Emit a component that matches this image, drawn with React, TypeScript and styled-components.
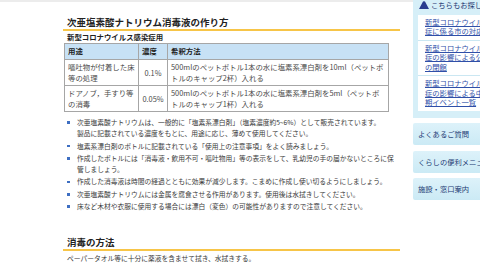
import React from 'react';
import styled, { createGlobalStyle } from 'styled-components';

const GlobalStyle = createGlobalStyle`
  html, body {
    margin: 0;
    padding: 0;
    background: #fff;
    overflow: hidden;
  }
  body {
    font-family: "Noto Sans CJK JP", "Noto Sans", sans-serif;
    color: #333;
  }
`;

const Page = styled.div`
  display: flex;
  align-items: flex-start;
  width: 530px;
`;

const MainArea = styled.main`
  flex: 0 0 413px;
  box-sizing: border-box;
  border-top: 2px solid #ececec;
  padding: 0 13px 0 63px;
`;

const Title = styled.h2<{ $top: number }>`
  margin: ${({ $top }) => $top}px 0 0;
  padding: 0 0 0 4px;
  font-size: 9.5px;
  line-height: 14px;
  font-weight: 700;
  color: #222;
  border-bottom: 2px solid #f7c548;
`;

const SubTitle = styled.h3`
  margin: 1.2px 0 1.3px;
  padding-left: 4px;
  font-size: 7.4px;
  line-height: 10px;
  font-weight: 700;
  color: #222;
`;

const Table = styled.table`
  margin-left: 1px;
  width: 324px;
  border-collapse: collapse;
  table-layout: fixed;
  font-size: 7.4px;
  line-height: 10.5px;
`;

const Col = styled.col<{ $w: number }>`
  width: ${({ $w }) => $w}px;
`;

const Th = styled.th`
  padding: 2.5px 3px;
  border: 1px solid #a6a6a6;
  background: #c7e1f5;
  text-align: left;
  font-weight: 700;
  color: #222;
`;

const Td = styled.td<{ $center?: boolean }>`
  padding: 2px 3px;
  border: 1px solid #a6a6a6;
  vertical-align: middle;
  text-align: ${({ $center }) => ($center ? 'center' : 'left')};
  color: #4a4a4a;
`;

const NoteList = styled.ul`
  list-style: none;
  margin: 4.5px 0 0;
  padding: 0 0 0 4px;
  width: 332px;
  font-size: 6.75px;
  line-height: 11.3px;
  color: #3a3a3a;
`;

const NoteItem = styled.li`
  display: flex;
  margin-bottom: 1px;

  &::before {
    content: '';
    flex: 0 0 2.5px;
    height: 2.5px;
    margin: 4.4px 7.5px 0 0;
    background: #3e6fc2;
  }
`;

const Para = styled.p`
  margin: 2.5px 0 0;
  padding-left: 4px;
  font-size: 6.75px;
  line-height: 11px;
  color: #3a3a3a;
`;

const Sidebar = styled.aside`
  flex: 0 0 108px;
`;

const SidePanel = styled.div`
  background: #d6eff8;
  padding: 0 5px 7px;
`;

const SideHead = styled.div`
  display: flex;
  align-items: center;
  gap: 2px;
  height: 10px;
  margin-bottom: 5px;
  padding-left: 1px;
  font-size: 7.3px;
  line-height: 10px;
  color: #1d3570;
`;

const LinkBox = styled.ul`
  list-style: none;
  margin: 0;
  padding: 0;
  background: #fff;
`;

const LinkItem = styled.li`
  padding: 2.8px 7px;
  font-size: 7.3px;
  line-height: 9.6px;

  & + & {
    border-top: 1px solid #cbe7f2;
  }

  a {
    color: #2f4fa8;
    text-decoration: underline;
  }
`;

const MenuButton = styled.a`
  display: block;
  margin-top: 5.5px;
  height: 22px;
  padding-left: 5px;
  border-radius: 2px;
  background: linear-gradient(#ddf2fa, #cbeaf5);
  font-size: 7.3px;
  line-height: 22px;
  color: #223a74;
  text-decoration: none;
`;

const notes: React.ReactNode[] = [
  <>
    次亜塩素酸ナトリウムは、一般的に「塩素系漂白剤」（塩素濃度約5~6%）として販売されています。
    <br />
    製品に記載されている濃度をもとに、用途に応じ、薄めて使用してください。
  </>,
  '塩素系漂白剤のボトルに記載されている「使用上の注意事項」をよく読みましょう。',
  '作成したボトルには「消毒液・飲用不可・嘔吐物用」等の表示をして、乳幼児の手の届かないところに保管しましょう。',
  '作成した消毒液は時間の経過とともに効果が減少します。こまめに作成し使い切るようにしましょう。',
  '次亜塩素酸ナトリウムには金属を腐食させる作用があります。使用後は水拭きしてください。',
  '床など木材や衣服に使用する場合には漂白（変色）の可能性がありますので注意してください。',
];

const rows = [
  {
    use: '嘔吐物が付着した床等の処理',
    rate: '0.1%',
    how: '500mlのペットボトル1本の水に塩素系漂白剤を10ml（ペットボトルのキャップ2杯）入れる',
  },
  {
    use: 'ドアノブ，手すり等の消毒',
    rate: '0.05%',
    how: '500mlのペットボトル1本の水に塩素系漂白剤を5ml（ペットボトルのキャップ1杯）入れる',
  },
];

const links = [
  '新型コロナウイルス感染症に係る市の対応',
  '新型コロナウイルス感染症の影響による公共施設の閉館',
  '新型コロナウイルス感染症の影響による中止・延期イベント一覧',
];

const menus = ['よくあるご質問', 'くらしの便利メニュー', '施設・窓口案内'];

const App = () => (
  <>
    <GlobalStyle />
    <Page>
      <MainArea>
        <Title $top={12.5}>次亜塩素酸ナトリウム消毒液の作り方</Title>
        <SubTitle>新型コロナウイルス感染症用</SubTitle>
        <Table>
          <colgroup>
            <Col $w={74} />
            <Col $w={29} />
            <Col $w={221} />
          </colgroup>
          <thead>
            <tr>
              <Th>用途</Th>
              <Th>濃度</Th>
              <Th>希釈方法</Th>
            </tr>
          </thead>
          <tbody>
            {rows.map((r) => (
              <tr key={r.rate}>
                <Td>{r.use}</Td>
                <Td $center>{r.rate}</Td>
                <Td>{r.how}</Td>
              </tr>
            ))}
          </tbody>
        </Table>
        <NoteList>
          {notes.map((n, i) => (
            <NoteItem key={i}>
              <span>{n}</span>
            </NoteItem>
          ))}
        </NoteList>
        <Title $top={22.5}>消毒の方法</Title>
        <Para>ペーパータオル等に十分に薬液を含ませて拭き、水拭きする。</Para>
      </MainArea>
      <Sidebar>
        <SidePanel>
          <SideHead>
            <svg width="10" height="8" viewBox="0 0 10 8">
              <path d="M4 0.6 Q5 -0.2 6 0.6 L10 8 L0 8 Z" fill="#2a3d8f" />
            </svg>
            こちらもお探しですか
          </SideHead>
          <LinkBox>
            {links.map((l) => (
              <LinkItem key={l}>
                <a href="#">{l}</a>
              </LinkItem>
            ))}
          </LinkBox>
        </SidePanel>
        {menus.map((m) => (
          <MenuButton key={m} href="#">
            {m}
          </MenuButton>
        ))}
      </Sidebar>
    </Page>
  </>
);

export default App;
